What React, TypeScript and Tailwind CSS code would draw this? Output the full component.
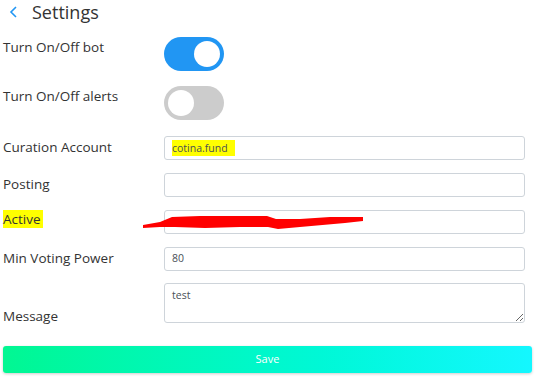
import React from 'react';

const Toggle: React.FC<{ on: boolean }> = ({ on }) => (
  <div className={`relative w-[60px] h-[34px] rounded-full ${on ? 'bg-[#2196f3]' : 'bg-[#cccccc]'}`}>
    <div className={`absolute top-[4px] w-[26px] h-[26px] rounded-full bg-white ${on ? 'left-[30px]' : 'left-[4px]'}`}></div>
  </div>
);

const inputCls = 'w-[361px] h-[24px] rounded-[3px] border border-[#ced4da] bg-white px-[7px] text-[10.5px] text-[#495057] flex items-center';

export default function App() {
  return (
    <div className="relative w-[537px] h-[384px] bg-white text-[#333] font-['Open_Sans','Noto_Sans',sans-serif] pl-[3px]">
      {/* Header */}
      <div className="flex items-center h-[24px]">
        <svg className="ml-[6px] w-[10px] h-[12px]" viewBox="0 0 10 12" fill="none" stroke="#2196f3" strokeWidth={1.6}>
          <path d="M7 1 L2 6 L7 11" />
        </svg>
        <span className="ml-[13px] text-[18px] leading-[24px]">Settings</span>
      </div>

      {/* Toggles */}
      <div className="flex mt-[13px]">
        <div className="w-[161px] text-[13.5px] leading-[20px]">Turn On/Off bot</div>
        <Toggle on />
      </div>
      <div className="flex mt-[15px]">
        <div className="w-[161px] text-[13.5px] leading-[20px]">Turn On/Off alerts</div>
        <Toggle on={false} />
      </div>

      {/* Inputs */}
      <div className="flex mt-[16px]">
        <div className="w-[161px] text-[13.5px] leading-[22px]">Curation Account</div>
        <div className={inputCls}>
          <span className="bg-[#ffff00] pr-[7px] leading-[16px]">cotina.fund</span>
        </div>
      </div>
      <div className="flex mt-[13px]">
        <div className="w-[161px] text-[13.5px] leading-[22px]">Posting</div>
        <div className={inputCls}></div>
      </div>
      <div className="flex mt-[13px]">
        <div className="w-[161px] text-[13.5px] leading-[18px]">
          <span className="bg-[#ffff00] pr-[2px]">Active</span>
        </div>
        <div className={inputCls}></div>
      </div>
      <div className="flex mt-[13px]">
        <div className="w-[161px] text-[13.5px] leading-[22px]">Min Voting Power</div>
        <div className={inputCls}>80</div>
      </div>
      <div className="flex items-end mt-[12px]">
        <div className="w-[161px] text-[13.5px] leading-[14px]">Message</div>
        <textarea
          className="w-[361px] h-[40px] rounded-[3px] border border-[#ced4da] bg-white px-[7px] py-[4px] text-[10.5px] leading-[14px] text-[#495057] outline-none"
          defaultValue="test"
        />
      </div>

      {/* Save */}
      <button className="mt-[23px] w-[529px] h-[27px] rounded-[3px] bg-gradient-to-r from-[#02f792] to-[#14f7ff] text-white text-[11px] shadow-[0_1px_3px_rgba(0,0,0,0.2)]">
        Save
      </button>

      {/* Red scribble over the Active field */}
      <svg className="absolute left-0 top-0 pointer-events-none" width="537" height="384" viewBox="0 0 537 384">
        <polygon
          fill="#ff0000"
          points="143,225 160,222 172,217 200,216 240,216 267,216 276,219 300,219 330,217 363,217 363,221 345,223 300,227 278,229 268,227 240,227 205,228 175,227 160,227 143,228"
        />
      </svg>
    </div>
  );
}
